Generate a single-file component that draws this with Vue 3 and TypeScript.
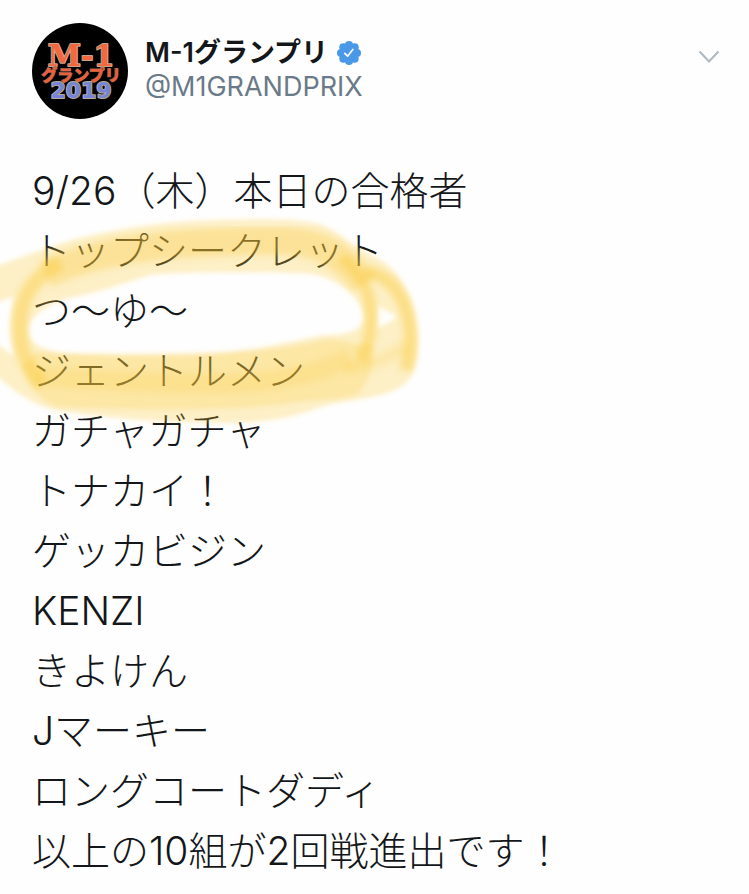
<script setup lang="ts">
const account = { name: 'M-1グランプリ', handle: '@M1GRANDPRIX' }

const lines: string[] = [
  '9/26（木）本日の合格者',
  'トップシークレット',
  'つ〜ゆ〜',
  'ジェントルメン',
  'ガチャガチャ',
  'トナカイ！',
  'ゲッカビジン',
  'KENZI',
  'きよけん',
  'Jマーキー',
  'ロングコートダディ',
  '以上の10組が2回戦進出です！',
]
</script>

<template>
  <article class="tweet">
    <header class="head">
      <svg class="avatar" viewBox="0 0 96 96" role="img" aria-label="M-1グランプリ 2019">
        <circle cx="48" cy="48" r="48" fill="#000" />
        <g text-anchor="middle" stroke-linejoin="round" paint-order="stroke">
          <text x="49" y="43" class="logo-m" fill="#f2683f" stroke="#c9a48c" stroke-width="2">M-1</text>
          <text x="49" y="58" class="logo-g" fill="#e8603c" stroke="#8d6450" stroke-width="1">グランプリ</text>
          <text x="49" y="75" class="logo-y" fill="#7584d8" stroke="#b8aa90" stroke-width="2">2019</text>
        </g>
      </svg>
      <div class="who">
        <div class="name-row">
          <span class="name">{{ account.name }}</span>
          <svg class="badge" viewBox="0 0 24 24" role="img" aria-label="認証済み">
            <g fill="#4a99e9">
              <circle cx="12" cy="12" r="9.5" />
              <circle cx="12" cy="4" r="4" />
              <circle cx="17.7" cy="6.3" r="4" />
              <circle cx="20" cy="12" r="4" />
              <circle cx="17.7" cy="17.7" r="4" />
              <circle cx="12" cy="20" r="4" />
              <circle cx="6.3" cy="17.7" r="4" />
              <circle cx="4" cy="12" r="4" />
              <circle cx="6.3" cy="6.3" r="4" />
            </g>
            <path d="M7.8 12.4l2.8 2.8 5.2-6.8" fill="none" stroke="#fff" stroke-width="1.7" stroke-linecap="round" stroke-linejoin="round" />
          </svg>
        </div>
        <span class="handle">{{ account.handle }}</span>
      </div>
      <button class="more" type="button" aria-label="メニュー">
        <svg viewBox="0 0 22 14" width="22" height="14">
          <path d="M1.5 1.5L11 11.5L20.5 1.5" fill="none" stroke="#b0bac3" stroke-width="2.2" />
        </svg>
      </button>
    </header>

    <div class="body">
      <p v-for="line in lines" :key="line" class="line">{{ line }}</p>
      <svg class="marker" viewBox="0 210 430 220" aria-hidden="true">
        <defs>
          <filter id="soft" x="-5%" y="-5%" width="110%" height="110%">
            <feGaussianBlur stdDeviation="2" />
          </filter>
          <filter id="softer" x="-10%" y="-10%" width="120%" height="120%">
            <feGaussianBlur stdDeviation="3" />
          </filter>
        </defs>
        <g fill="#fac832" filter="url(#soft)">
          <path
            fill-rule="evenodd"
            fill-opacity="0.27"
            d="M-10 268C20 258 45 248 75 239C130 226 170 221 220 220C260 219 300 218 322 225C340 232 350 245 375 257C398 268 416 295 418 335C419 370 412 384 390 392C370 400 340 400 315 409C290 418 265 423 225 423C160 423 110 418 58 411C30 405 10 388 -10 370V338C0 346 8 352 14 356C8 335 9 315 14 297C6 299 -2 302 -10 305Z
               M28 330C30 315 48 306 65 299C100 292 125 283 150 275C190 271 270 272 312 274C340 280 362 298 364 318C362 330 348 335 325 335C290 341 260 350 215 352C150 354 100 354 65 353C42 350 28 343 28 330Z
               M378 305C384 311 391 313 397 316C391 322 384 325 377 328Z"
          />
          <path
            fill-opacity="0.24"
            d="M36 352C100 357 180 357 225 354C270 350 300 346 325 340C345 338 352 346 372 344C378 362 370 378 358 394C340 401 310 399 285 404C220 412 120 409 58 407C38 400 26 384 22 366Z"
          />
        </g>
        <g fill="none" stroke="#fac832" stroke-linejoin="round" filter="url(#softer)">
          <path
            stroke-width="28"
            stroke-opacity="0.32"
            d="M46 274C90 253 150 244 220 242C270 240 305 238 330 252C346 262 356 272 364 284"
          />
          <path
            stroke-width="15"
            stroke-opacity="0.42"
            d="M60 262C30 280 20 300 20 325C20 350 26 366 42 384"
          />
          <path
            stroke-width="20"
            stroke-opacity="0.2"
            d="M38 376C110 382 180 384 240 383C290 380 320 372 350 358"
          />
          <path
            stroke-width="12"
            stroke-opacity="0.42"
            d="M342 258C362 274 371 292 371 318C371 336 368 348 360 360"
          />
          <path
            stroke-width="13"
            stroke-opacity="0.42"
            d="M366 272C392 276 407 298 410 330C411 346 409 360 405 370"
          />
          <path stroke-width="12" stroke-opacity="0.18" d="M345 368C370 366 390 358 405 346" />
        </g>
      </svg>
    </div>
  </article>
</template>

<style>
body {
  margin: 0;
  background: #fefefe;
}
</style>

<style scoped>
.tweet {
  padding: 23px 29px 10px 32px;
  color: #14171a;
  font-family: Inter, "Noto Sans CJK JP", sans-serif;
}
.head {
  display: flex;
  align-items: flex-start;
  gap: 17px;
}
.avatar {
  width: 96px;
  height: 96px;
  flex: none;
}
.logo-m {
  font: 700 30px "DejaVu Serif", serif;
}
.logo-g {
  font: 900 16px "Noto Sans CJK JP", sans-serif;
}
.logo-y {
  font: 700 22px "DejaVu Sans", sans-serif;
}
.who {
  flex: 1;
  min-width: 0;
  padding-top: 12px;
}
.name-row {
  display: flex;
  align-items: center;
  gap: 9px;
  height: 35px;
}
.name {
  font-size: 27px;
  line-height: 35px;
  font-weight: 600;
}
.badge {
  width: 24px;
  height: 24px;
}
.handle {
  display: block;
  font-size: 27px;
  line-height: 34px;
  color: #6b7a88;
}
.more {
  display: flex;
  margin-top: 27px;
  padding: 0;
  border: 0;
  background: none;
}
.body {
  position: relative;
  margin-top: 42px;
}
.line {
  margin: 0;
  font-size: 39px;
  line-height: 60px;
  font-weight: 300;
}
.marker {
  position: absolute;
  left: -32px;
  top: 49px;
  width: 430px;
  height: 220px;
  pointer-events: none;
}
</style>
